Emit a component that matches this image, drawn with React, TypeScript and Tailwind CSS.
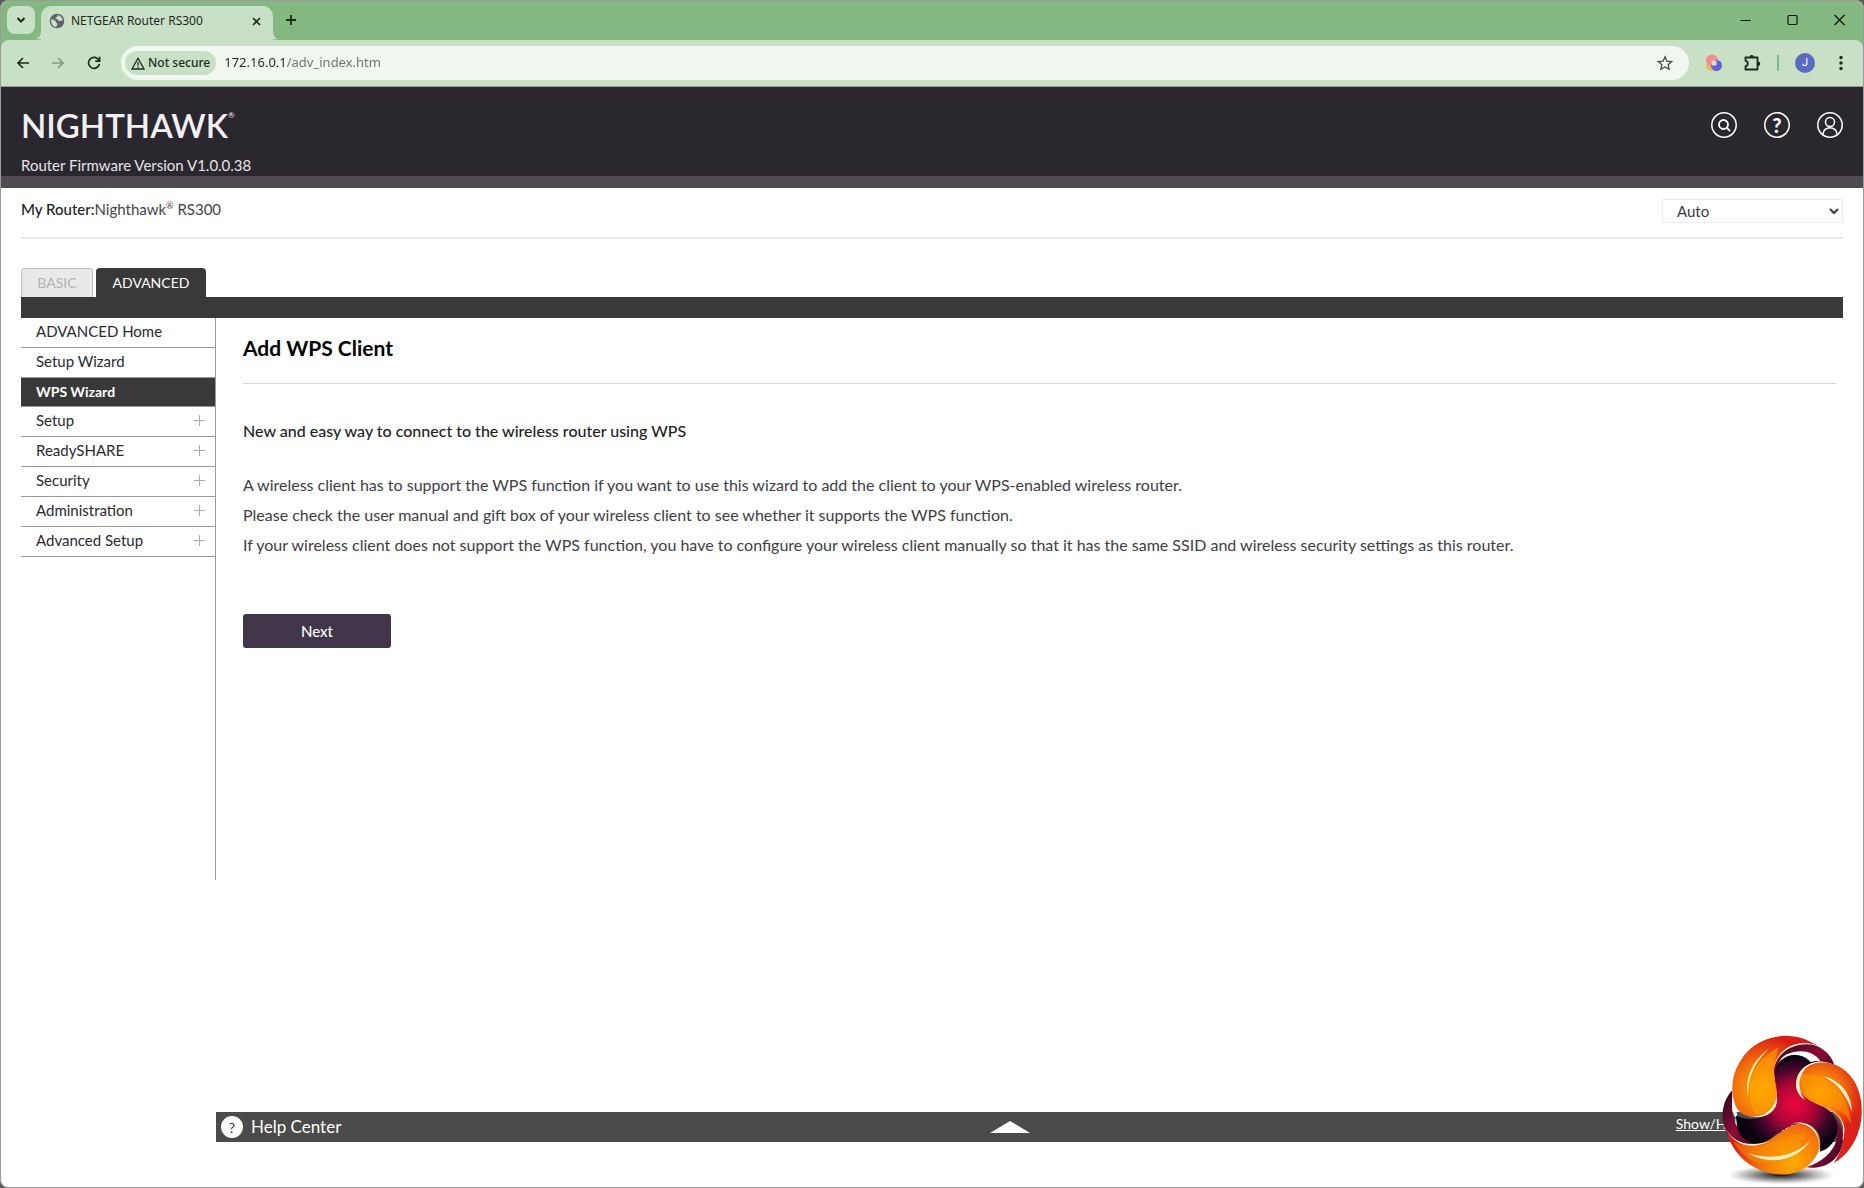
import { useState } from "react";

type MenuItem = { label: string; expandable?: boolean };

const MENU: MenuItem[] = [
  { label: "ADVANCED Home" },
  { label: "Setup Wizard" },
  { label: "WPS Wizard" },
  { label: "Setup", expandable: true },
  { label: "ReadySHARE", expandable: true },
  { label: "Security", expandable: true },
  { label: "Administration", expandable: true },
  { label: "Advanced Setup", expandable: true },
];

export default function App() {
  return (
    <div className="min-h-screen bg-[#5b5b5b] font-['Lato',sans-serif]">
      <div className="relative flex min-h-screen flex-col overflow-hidden rounded-lg border border-[#9b9b9b] bg-white">
        <TabStrip />
        <Toolbar />
        <Header />
        <main className="flex flex-1 flex-col px-5 pb-[45px]">
          <RouterBar />
          <SectionTabs />
          <div className="flex flex-1">
            <SideMenu />
            <div className="flex min-w-0 flex-1 flex-col">
              <WpsPanel />
              <HelpBar />
            </div>
          </div>
        </main>
        <SwirlLogo />
      </div>
    </div>
  );
}

function TabStrip() {
  return (
    <div className="flex h-[39px] items-end bg-[#83b981] pl-1.5 font-['Noto_Sans',sans-serif] text-[#1f2a1f]">
      <button aria-label="Search tabs" className="mb-1.5 flex size-7 items-center justify-center rounded-lg bg-[#c8e0c6]">
        <svg width="10" height="10" viewBox="0 0 10 10" fill="none" stroke="currentColor" strokeWidth="2">
          <path d="M1.5 3 5 6.5 8.5 3" />
        </svg>
      </button>
      <TabFoot />
      <div className="flex h-[34px] w-[232px] items-center rounded-t-[10px] bg-[#c8e0c6] pr-2.5 pb-1 pl-2">
        <svg width="16" height="16" viewBox="0 0 16 16" className="shrink-0">
          <circle cx="8" cy="8" r="7.3" fill="#5f6368" />
          <path d="M2 6.5c2-.2 3.6.3 4.400 1.500.8 1 .2 1.800 1.400 2 1 .2.800 1.600.200 2.200-.6.600-.4 1.400-.8 1.900C4 13.700 1.800 11 2 6.500Z" fill="#c8e0c6" />
          <path d="M8.500 2.200c-.8.600.2 1.300-.6 1.900-.7.500-1.500.400-1.400 1.300.1.800 1.700.600 2.300 1.100.7.600.7 1.600 1.800 1.700 1.300.1 1.300-.9 3.200-.6-.2-2.900-2.300-5-5.300-5.400Z" fill="#c8e0c6" />
        </svg>
        <span className="ml-1.5 flex-1 text-[12px]">NETGEAR Router RS300</span>
        <button aria-label="Close tab" className="p-0.5">
          <svg width="9" height="9" viewBox="0 0 9 9" stroke="currentColor" strokeWidth="1.600">
            <path d="m1 1 7 7M8 1 1 8" />
          </svg>
        </button>
      </div>
      <TabFoot flip />
      <button aria-label="New tab" className="mb-3.5 ml-1.5">
        <svg width="12" height="12" viewBox="0 0 12 12" stroke="currentColor" strokeWidth="1.800">
          <path d="M6 1v10M1 6h10" />
        </svg>
      </button>
      <div className="mr-[18px] mb-3.5 ml-auto flex items-center gap-9 text-[#111]">
        <button aria-label="Minimize">
          <svg width="11" height="12" viewBox="0 0 11 12" stroke="currentColor">
            <path d="M.5 6.500h10" />
          </svg>
        </button>
        <button aria-label="Maximize">
          <svg width="11" height="12" viewBox="0 0 11 12" fill="none" stroke="currentColor" strokeWidth="1.200">
            <rect x="1" y="1.500" width="9" height="9" rx="1.200" />
          </svg>
        </button>
        <button aria-label="Close">
          <svg width="11" height="12" viewBox="0 0 11 12" stroke="currentColor" strokeWidth="1.200">
            <path d="m.5 1 10 10M10.500 1l-10 10" />
          </svg>
        </button>
      </div>
    </div>
  );
}

function TabFoot({ flip = false }: { flip?: boolean }) {
  return (
    <svg width="6" height="10" viewBox="0 0 7 10" className={flip ? "-scale-x-100" : ""} fill="#c8e0c6">
      <path d="M7 0v10H0C5 9 7 5 7 0Z" />
    </svg>
  );
}

function Toolbar() {
  return (
    <div className="bg-[#83b981]">
      <div className="flex h-[47px] items-center rounded-t-[8px] border-b border-[#8fa28e] bg-[#c8e0c6] px-4 font-['Noto_Sans',sans-serif] text-[#1f2a1f]">
        <div className="flex items-center gap-[23px]">
          <button aria-label="Back">
            <svg width="12" height="12" viewBox="0 0 12 12" fill="none" stroke="currentColor" strokeWidth="1.600">
              <path d="M12 6H1.200M6 1 1 6l5 5" />
            </svg>
          </button>
          <button aria-label="Forward" className="text-[#84997f]">
            <svg width="12" height="12" viewBox="0 0 12 12" fill="none" stroke="currentColor" strokeWidth="1.600">
              <path d="M0 6h10.800M6 1l5 5-5 5" />
            </svg>
          </button>
          <button aria-label="Reload">
            <svg width="14" height="14" viewBox="0 0 14 14" fill="none" stroke="currentColor" strokeWidth="1.700">
              <path d="M12 4.500A5.500 5.500 0 1 0 12.400 8M12.600.800v4.400H8.300" />
            </svg>
          </button>
        </div>
        <div className="ml-5 flex h-[34px] flex-1 items-center rounded-full bg-[#f0f7ef] pr-4 pl-1">
          <button className="flex h-6 items-center gap-[3px] rounded-full bg-[#c8e0c6] px-1.5 text-[12px] font-medium">
            <svg width="14" height="13" viewBox="0 0 14 13" fill="none" stroke="currentColor" strokeWidth="1.300">
              <path d="M7 1.300 13 12H1L7 1.300ZM7 5v3.500M7 9.500v1.300" />
            </svg>
            Not secure
          </button>
          <input
            aria-label="Address"
            defaultValue="172.16.0.1/adv_index.htm"
            className="ml-2 min-w-0 flex-1 bg-[linear-gradient(90deg,#1f2a1f_62px,#66736a_62px)] bg-clip-text text-[13px] text-transparent outline-none"
          />
          <button aria-label="Bookmark">
            <svg width="16" height="16" viewBox="0 0 16 16" fill="none" stroke="#424f43" strokeWidth="1.300">
              <path d="m8 1.800 1.900 4.300 4.700.5-3.500 3.100 1 4.600L8 11.900l-4.100 2.400 1-4.600L1.400 6.600l4.700-.5L8 1.800Z" />
            </svg>
          </button>
        </div>
        <div className="ml-4 flex items-center">
          <button aria-label="Extension">
            <svg width="18" height="18" viewBox="0 0 18 18">
              <circle cx="6" cy="12" r="5" fill="#f5b860" />
              <circle cx="7" cy="6.500" r="6" fill="#f58d88" />
              <circle cx="11.500" cy="11.500" r="5.500" fill="#6860d0" />
              <rect x="6.500" y="6.500" width="5" height="5" rx="1" fill="#d4dfd1" />
            </svg>
          </button>
          <button aria-label="Extensions" className="ml-5">
            <svg width="18" height="18" viewBox="0 0 18 18" fill="none" stroke="currentColor" strokeWidth="1.800">
              <path d="M2.500 3.500h12v12h-12v-3.300c3 0 3-5.400 0-5.400Z" strokeLinejoin="round" />
              <path d="M6.500 3.200a2.200 2.200 0 0 1 4.400 0ZM15 7.500a2.200 2.200 0 0 1 0 4.400Z" fill="currentColor" stroke="none" />
            </svg>
          </button>
          <span className="ml-4 h-4 w-0.5 bg-[#83b981]" />
          <button className="ml-4 flex size-5 items-center justify-center rounded-full bg-[#5c6bc0] font-['Roboto',sans-serif] text-[11px] text-white">
            J
          </button>
          <button aria-label="Menu" className="ml-5">
            <svg width="12" height="16" viewBox="0 0 12 16" fill="currentColor">
              <circle cx="6" cy="2.500" r="1.700" />
              <circle cx="6" cy="8" r="1.700" />
              <circle cx="6" cy="13.500" r="1.700" />
            </svg>
          </button>
        </div>
      </div>
    </div>
  );
}

function Header() {
  return (
    <header className="flex items-start justify-between border-b-12 border-[#4f4b51] bg-[#2b272f] px-5 pt-5 text-white">
      <div>
        <div className="flex h-9 items-start leading-9 text-[#f2f0f2]">
          <span className="text-[33px] font-semibold">NIGHTHAWK</span>
          <span className="text-[8px] leading-4">®</span>
        </div>
        <p className="mt-3 mb-px text-[15px] leading-5 text-[#e6e4e7]">Router Firmware Version V1.0.0.38</p>
      </div>
      <div className="mt-[5px] flex gap-[27px]">
        <button aria-label="Search">
          <svg width="26" height="26" viewBox="0 0 26 26" fill="none" stroke="currentColor" strokeWidth="1.500">
            <circle cx="13" cy="13" r="12.200" />
            <circle cx="12.500" cy="12.500" r="4.500" strokeWidth="1.800" />
            <path d="m16 16 3 3" strokeWidth="2" />
          </svg>
        </button>
        <button aria-label="Help" className="relative flex size-[26px] items-center justify-center text-[20px] font-black">
          <svg className="absolute inset-0" width="26" height="26" viewBox="0 0 26 26" fill="none" stroke="currentColor" strokeWidth="1.500">
            <circle cx="13" cy="13" r="12.200" />
          </svg>
          ?
        </button>
        <button aria-label="Account">
          <svg width="26" height="26" viewBox="0 0 26 26" fill="none" stroke="currentColor" strokeWidth="1.500">
            <circle cx="13" cy="13" r="12.200" />
            <circle cx="13" cy="10" r="4.500" />
            <path d="M6 22.500c0-9 14-9 14 0" />
          </svg>
        </button>
      </div>
    </header>
  );
}

function RouterBar() {
  return (
    <div className="flex h-[51px] items-start justify-between border-b-2 border-[#e8e8e8] pt-[11px]">
      <p className="text-[15px] leading-5 text-[#45434a]">
        <span className="font-medium text-[#222]">My Router:</span>Nighthawk
        <span className="align-text-top text-[9px] leading-3">®</span> RS300
      </p>
      <select aria-label="Language" defaultValue="Auto" className="h-6 w-[181px] border border-[#ededed] bg-white pl-2.5 text-[15px] text-[#3b3940]">
        <option>Auto</option>
        <option>English</option>
      </select>
    </div>
  );
}

function SectionTabs() {
  return (
    <div className="mt-[29px] h-[50px] border-b-21 border-[#393939]">
      <div className="flex h-[29px] gap-[3px] text-[14px]">
        <button className="w-[72px] rounded-t-[4px] border border-b-0 border-[#c2c2c2] bg-[#e9e9e9] pb-0.5 text-[#b2b2b2]">BASIC</button>
        <button className="w-[110px] rounded-t-[4px] bg-[#393939] text-white">ADVANCED</button>
      </div>
    </div>
  );
}

function SideMenu() {
  const [active, setActive] = useState("WPS Wizard");

  return (
    <nav className="h-[562px] w-[195px] shrink-0 border-r border-[#9a9a9a]">
      {MENU.map((item) => (
        <button
          key={item.label}
          onClick={() => setActive(item.label)}
          className={`flex w-full items-center justify-between border-b border-[#9a9a9a] pr-2.5 pb-0.5 pl-[15px] ${
            item.label === active ? "h-[29px] bg-[#393939] text-[14px] font-bold text-white" : "h-[30px] text-[15px] text-[#2b2930]"
          }`}
        >
          {item.label}
          {item.expandable && (
            <svg width="11" height="11" viewBox="0 0 11 11" stroke="#aaa">
              <path d="M5.500 0v11M0 5.500h11" />
            </svg>
          )}
        </button>
      ))}
    </nav>
  );
}

function WpsPanel() {
  return (
    <section className="flex-1 pt-[15px] pr-[7px] pl-[27px] text-[16px] leading-[30px] text-[#403d45]">
      <h1 className="border-b border-[#d5d5d5] pb-5 text-[21px] font-bold text-black">Add WPS Client</h1>
      <h2 className="mt-8 font-medium text-[#222]">New and easy way to connect to the wireless router using WPS</h2>
      <div className="mt-6">
        <p>A wireless client has to support the WPS function if you want to use this wizard to add the client to your WPS-enabled wireless router.</p>
        <p>Please check the user manual and gift box of your wireless client to see whether it supports the WPS function.</p>
        <p>
          If your wireless client does not support the WPS function, you have to configure your wireless client manually so that it has the same
          SSID and wireless security settings as this router.
        </p>
      </div>
      <button className="mt-[54px] block h-[34px] w-[148px] rounded-[3px] bg-[#403549] text-[15px] leading-5 font-medium text-white">Next</button>
    </section>
  );
}

function HelpBar() {
  return (
    <footer className="relative flex h-[30px] items-center justify-between bg-[#4b4b4b] pr-5 pl-[5px] text-white">
      <div className="flex items-center gap-2 text-[17px]">
        <span className="flex size-[22px] items-center justify-center rounded-full bg-white text-[14px] text-[#333]">?</span>
        Help Center
      </div>
      <button aria-label="Expand help" className="absolute left-1/2 -ml-10">
        <svg width="40" height="12" viewBox="0 0 40 12" fill="white">
          <path d="M20 0 40 12H0Z" />
        </svg>
      </button>
      <a href="#help" className="pb-2 text-[14px] underline">
        Show/Hide Help Center
      </a>
    </footer>
  );
}

function SwirlLogo() {
  return (
    <svg className="absolute right-0 bottom-0 h-[154px] w-[142px]" viewBox="185 70 426 462" aria-hidden="true">
      <defs>
        <radialGradient id="core" gradientUnits="userSpaceOnUse" cx="405" cy="285" r="150">
          <stop offset="0" stopColor="#f0063c" />
          <stop offset=".4" stopColor="#ae0638" />
          <stop offset=".75" stopColor="#3a0629" />
          <stop offset="1" stopColor="#0c0310" />
        </radialGradient>
        <radialGradient id="bladeA" gradientUnits="userSpaceOnUse" cx="310" cy="240" r="165">
          <stop offset="0" stopColor="#ffa900" />
          <stop offset=".5" stopColor="#f2740c" />
          <stop offset="1" stopColor="#d91a16" />
        </radialGradient>
        <radialGradient id="bladeB" gradientUnits="userSpaceOnUse" cx="480" cy="250" r="150">
          <stop offset="0" stopColor="#ffa900" />
          <stop offset=".45" stopColor="#f2740c" />
          <stop offset=".85" stopColor="#dc2118" />
        </radialGradient>
        <radialGradient id="bladeC" gradientUnits="userSpaceOnUse" cx="400" cy="455" r="190">
          <stop offset="0" stopColor="#ffad00" />
          <stop offset=".5" stopColor="#f2740c" />
          <stop offset="1" stopColor="#d91a16" />
        </radialGradient>
        <linearGradient id="tube" x1="0" y1="0" x2="1" y2="1">
          <stop offset="0" stopColor="#25051d" />
          <stop offset=".5" stopColor="#8f0b37" />
          <stop offset="1" stopColor="#21051b" />
        </linearGradient>
        <radialGradient id="shade">
          <stop offset="0" stopColor="#000" stopOpacity=".95" />
          <stop offset=".5" stopColor="#222" stopOpacity=".5" />
          <stop offset="1" stopColor="#555" stopOpacity="0" />
        </radialGradient>
      </defs>
      <ellipse cx="365" cy="496" rx="160" ry="28" fill="url(#shade)" />

      {/* rear tubes */}
      <path d="M344 205C335 145 375 98 435 100c45 3 80 30 90 67-20-12-48-14-65-8-15-30-45-38-78-25-20 10-30 30-38 71Z" fill="url(#tube)" />
      <path d="M219 242c-34 34-38 95-14 133 27 37 65 50 105 30l-30-17c-38-10-60-45-62-98Z" fill="url(#tube)" />
      <path d="M440 473c65 8 108-30 112-86 0-38-26-73-66-92l-15 20c53 18 70 54 57 84-8 25-35 57-88 74Z" fill="url(#tube)" />

      <path d="M346 195c-2-38 38-68 85-60 25 4 39 17 45 20-35 5-60 30-60 65 3 40 40 55 77 71 34 18 49 52 39 82-8 29-29 47-52 63 12-48-14-93-61-94-42 2-68 46-118 50-39 0-68-26-72-75 48 25 117 7 123-51 2-29-10-46-6-71Z" fill="url(#core)" />
      <path d="M351 176c8-31 49-46 91-35 15 5 26 11 31 14-54-18-91-4-122 21ZM233 333c10 46 57 69 110 45-23 28-49 30-71 19-28-11-42-34-39-64ZM528 335c17 46-10 68-48 99 5-24 3-37-3-48 38-2 56-18 51-51Z" fill="#0c0310" />

      {/* openings between the tubes and the core */}
      <path d="M386 135c28-17 74-14 97 19-12-1-20 1-29 3-15-17-40-24-68-22Z" fill="#fff" />
      <path d="M219 288c0 18 4 29 10 36l5-11c-4-10-9-18-15-25Z" fill="#fff" />
      <path d="M470 447c31-8 52-26 60-53-17 20-40 30-55 34Z" fill="#fff" />

      <path d="M229 289c-22-57-7-119 37-165 48-48 127-60 190-26l18 9c-55-17-112 11-128 64-8 32 12 59 5 98-9 38-47 59-86 50-18-5-29-15-36-30Z" fill="url(#bladeA)" />
      <path d="M288 315c-37-69-19-154 71-203-18 47-20 83-11 130 9 50-25 74-60 73Z" fill="#ffa800" opacity=".55" />
      <path d="M266 262c-10-54 10-108 62-143-48 44-62 90-62 143Z" fill="#fff0a5" />
      <path d="M350 268c-8 36-42 58-84 52 51 12 91-14 87-56M344 172c12-48 69-80 129-64-50-22-117 4-129 64" fill="#fff5d8" />

      <path d="M419 224c-4-46 44-79 104-60 63 22 91 91 83 162-7 63-41 112-84 135 25-35 37-75 28-107-8-34-30-48-61-65-39-14-67-28-70-65Z" fill="url(#bladeB)" />
      <path d="M423 195c72-8 141 36 154 151-18-42-46-51-88-61-40-10-66-40-66-90Z" fill="#ff9d00" opacity=".5" />
      <path d="M490 198c50 14 86 48 88 108-18-54-45-86-88-108ZM451 163c-47 20-56 82-14 108-27-35-22-75 14-108ZM497 289c50 23 70 60 52 105 10-53-4-79-52-105Z" fill="#fff0c5" />

      <path d="M204 373c40 42 93 43 138 10 40-29 68-49 103-38 29 8 43 38 36 69-16 55-70 86-126 80-71-7-130-52-151-121Z" fill="url(#bladeC)" />
      <path d="M222 396c89 44 150-30 219-24-31 44-83 100-150 85-27-8-51-32-69-61Z" fill="#ff9a00" opacity=".45" />
      <path d="M264 430c75 40 146 22 188-35-48 44-111 59-188 35ZM194 350c27 58 80 73 138 44-63 20-111 8-138-44ZM397 341c52-13 87 20 83 73-1-50-33-78-83-73Z" fill="#fff0c5" />
    </svg>
  );
}
